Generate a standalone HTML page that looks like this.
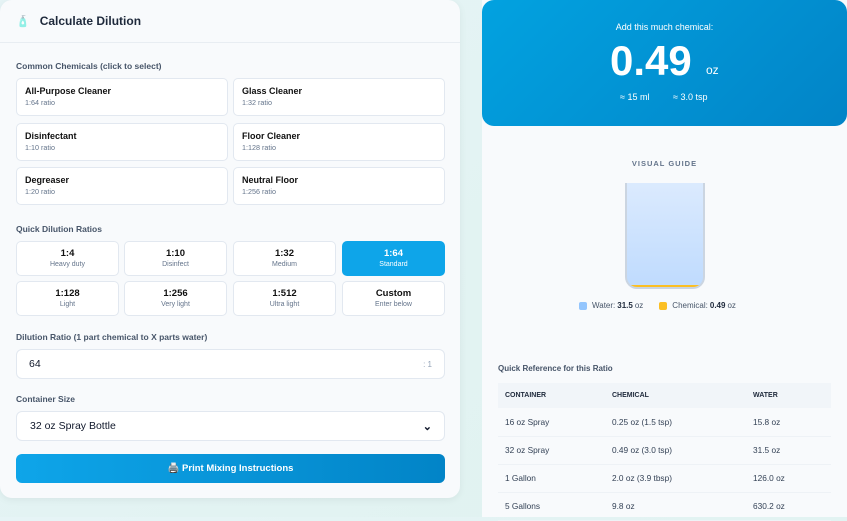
<!DOCTYPE html>
<html><head><meta charset="utf-8"><style>
*{box-sizing:border-box;margin:0;padding:0}
body{width:847px;height:517px;overflow:hidden;background:linear-gradient(135deg,#e6f4f6,#dff2ef);font-family:"Liberation Sans",sans-serif;position:relative;color:#0f172a}
.left{position:absolute;left:0;top:0;width:460px;height:498px;background:#f8fafc;border-radius:12px;box-shadow:0 2px 8px rgba(0,0,0,.06)}
.hdr{height:43px;border-bottom:1px solid #e8edf2;display:flex;align-items:center;padding-left:16px;font-weight:bold;font-size:12px;color:#1e293b}
.lbl{position:absolute;left:16px;font-size:8.5px;font-weight:bold;color:#475569}
.card{position:absolute;background:#fff;border:1px solid #e2e8f0;border-radius:5px;padding:7px 8px}
.card b{display:block;font-size:9px;color:#111}
.card span{display:block;font-size:7.2px;color:#64748b;margin-top:2px}
.rb{position:absolute;background:#fff;border:1px solid #e2e8f0;border-radius:5px;text-align:center;padding-top:6px;height:35px;width:103px}
.rb b{display:block;font-size:9.5px;color:#111}
.rb span{display:block;font-size:7px;color:#64748b;margin-top:2px}
.rb.on{background:#0ea5e9;border-color:#0ea5e9}
.rb.on b,.rb.on span{color:#fff}
.inp{position:absolute;left:16px;width:429px;height:30px;background:#fff;border:1px solid #e2e8f0;border-radius:6px;font-size:10.5px;display:flex;align-items:center;padding:0 12px;justify-content:space-between}
.btn{position:absolute;left:16px;top:454px;width:429px;height:29px;border-radius:6px;background:linear-gradient(90deg,#0ea5e9,#0284c7);color:#fff;font-size:9.5px;font-weight:bold;display:flex;align-items:center;justify-content:center}
.right{position:absolute;left:482px;top:0;width:365px;height:517px;background:#f8fafc}
.top{position:absolute;left:0;top:0;width:365px;height:126px;border-radius:12px;background:linear-gradient(135deg,#02a2e0,#0284c7);color:#fff;text-align:center}
table{position:absolute;left:16px;top:383px;width:333px;border-collapse:collapse;font-size:8.3px;color:#334155}
th{background:#f1f5f9;text-align:left;font-size:7px;font-weight:bold;height:25px;padding-left:7px;color:#1e293b}
td{height:28px;padding-left:7px;border-bottom:1px solid #eef2f6}
</style></head><body>
<div class="left">
<div class="hdr"><span style="font-size:11px;margin-right:10px;opacity:.6">🧴</span>Calculate Dilution</div>
<div class="lbl" style="top:61px">Common Chemicals (click to select)</div>
<div class="card" style="left:16px;top:78px;width:212px;height:38px"><b>All-Purpose Cleaner</b><span>1:64 ratio</span></div>
<div class="card" style="left:233px;top:78px;width:212px;height:38px"><b>Glass Cleaner</b><span>1:32 ratio</span></div>
<div class="card" style="left:16px;top:123px;width:212px;height:38px"><b>Disinfectant</b><span>1:10 ratio</span></div>
<div class="card" style="left:233px;top:123px;width:212px;height:38px"><b>Floor Cleaner</b><span>1:128 ratio</span></div>
<div class="card" style="left:16px;top:167px;width:212px;height:38px"><b>Degreaser</b><span>1:20 ratio</span></div>
<div class="card" style="left:233px;top:167px;width:212px;height:38px"><b>Neutral Floor</b><span>1:256 ratio</span></div>
<div class="lbl" style="top:224px">Quick Dilution Ratios</div>
<div class="rb" style="left:16px;top:241px"><b>1:4</b><span>Heavy duty</span></div>
<div class="rb" style="left:124px;top:241px"><b>1:10</b><span>Disinfect</span></div>
<div class="rb" style="left:233px;top:241px"><b>1:32</b><span>Medium</span></div>
<div class="rb on" style="left:342px;top:241px"><b>1:64</b><span>Standard</span></div>
<div class="rb" style="left:16px;top:281px"><b>1:128</b><span>Light</span></div>
<div class="rb" style="left:124px;top:281px"><b>1:256</b><span>Very light</span></div>
<div class="rb" style="left:233px;top:281px"><b>1:512</b><span>Ultra light</span></div>
<div class="rb" style="left:342px;top:281px"><b>Custom</b><span>Enter below</span></div>
<div class="lbl" style="top:332px">Dilution Ratio (1 part chemical to X parts water)</div>
<div class="inp" style="top:349px"><span>64</span><span style="color:#94a3b8;font-size:8px">: 1</span></div>
<div class="lbl" style="top:394px">Container Size</div>
<div class="inp" style="top:411px;padding-left:13px"><span>32 oz Spray Bottle</span><span style="font-size:11px;font-weight:bold">⌄</span></div>
<div class="btn">🖨️ Print Mixing Instructions</div>
</div>
<div class="right">
<div class="top">
<div style="position:absolute;top:22px;width:100%;font-size:9px">Add this much chemical:</div>
<div style="position:absolute;top:37px;left:128px;font-size:42px;font-weight:bold">0.49</div>
<div style="position:absolute;top:63px;left:224px;font-size:12px">oz</div>
<div style="position:absolute;top:92px;left:138px;font-size:9px">≈ 15 ml</div>
<div style="position:absolute;top:92px;left:191px;font-size:9px">≈ 3.0 tsp</div>
</div>
<div style="position:absolute;top:159px;width:100%;text-align:center;font-size:7.5px;font-weight:bold;letter-spacing:1px;color:#64748b">VISUAL GUIDE</div>
<div style="position:absolute;left:143px;top:183px;width:80px;height:106px;border:2px solid #cbd5e1;border-top:none;border-radius:0 0 12px 12px;background:linear-gradient(#dbeafe,#bfdbfe);overflow:hidden"><div style="position:absolute;bottom:0;left:0;right:0;height:2px;background:#fbbf24"></div></div>
<div style="position:absolute;top:301px;left:97px;font-size:8px;color:#475569;display:flex;align-items:center"><i style="display:inline-block;width:8px;height:8px;background:#93c5fd;border-radius:2px;margin-right:5px"></i>Water: <b style="color:#1e293b;margin:0 2px">31.5</b> oz<i style="display:inline-block;width:8px;height:8px;background:#fbbf24;border-radius:2px;margin:0 5px 0 16px"></i>Chemical: <b style="color:#1e293b;margin:0 2px">0.49</b> oz</div>
<div style="position:absolute;top:364px;left:16px;font-size:8px;font-weight:bold;color:#475569">Quick Reference for this Ratio</div>
<table>
<tr><th style="width:107px">CONTAINER</th><th style="width:141px">CHEMICAL</th><th>WATER</th></tr>
<tr><td>16 oz Spray</td><td>0.25 oz (1.5 tsp)</td><td>15.8 oz</td></tr>
<tr><td>32 oz Spray</td><td>0.49 oz (3.0 tsp)</td><td>31.5 oz</td></tr>
<tr><td>1 Gallon</td><td>2.0 oz (3.9 tbsp)</td><td>126.0 oz</td></tr>
<tr><td>5 Gallons</td><td>9.8 oz</td><td>630.2 oz</td></tr>
</table>
</div>
</body></html>
